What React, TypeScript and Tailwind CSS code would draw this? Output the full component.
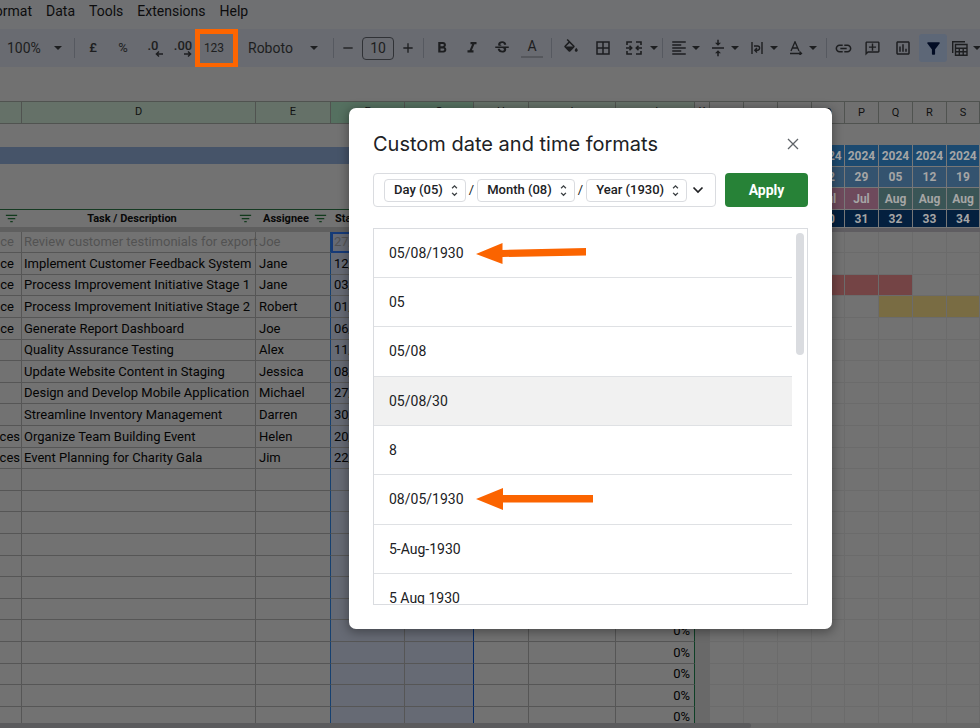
import type { ReactNode } from "react";
import {
  MdAdd,
  MdBorderAll,
  MdFilterAlt,
  MdFormatAlignLeft,
  MdFormatBold,
  MdFormatItalic,
  MdFilterList,
  MdLink,
  MdOutlineAddComment,
  MdOutlineInsertChart,
  MdRemove,
  MdStrikethroughS,
  MdUnfoldMore,
  MdVerticalAlignCenter,
} from "react-icons/md";

const MENUS = ["Data", "Tools", "Extensions", "Help"];

const TASKS = [
  ["ce", "Review customer testimonials for export", "Joe", "27/05"],
  ["ce", "Implement Customer Feedback System", "Jane", "12/06"],
  ["ce", "Process Improvement Initiative Stage 1", "Jane", "03/07"],
  ["ce", "Process Improvement Initiative Stage 2", "Robert", "01/08"],
  ["ce", "Generate Report Dashboard", "Joe", "06/08"],
  ["", "Quality Assurance Testing", "Alex", "11/08"],
  ["", "Update Website Content in Staging", "Jessica", "08/09"],
  ["", "Design and Develop Mobile Application", "Michael", "27/09"],
  ["", "Streamline Inventory Management", "Darren", "30/09"],
  ["ces", "Organize Team Building Event", "Helen", "20/10"],
  ["ces", "Event Planning for Charity Gala", "Jim", "22/10"],
];

const ROWS = Array.from({ length: 24 }, (_, i) => i);
const rowHeight = (i: number) => (i % 5 === 0 || i % 5 === 2 ? "h-[21px]" : "h-[22px]");

const WEEKS = [
  { col: "L", year: "", day: "", month: "", week: "" },
  { col: "M", year: "", day: "", month: "", week: "" },
  { col: "N", year: "", day: "", month: "", week: "" },
  { col: "O", year: "2024", day: "22", month: "Jul", week: "30" },
  { col: "P", year: "2024", day: "29", month: "Jul", week: "31" },
  { col: "Q", year: "2024", day: "05", month: "Aug", week: "32" },
  { col: "R", year: "2024", day: "12", month: "Aug", week: "33" },
  { col: "S", year: "2024", day: "19", month: "Aug", week: "34" },
];

const FORMATS = ["05/08/1930", "05", "05/08", "05/08/30", "8", "08/05/1930", "5-Aug-1930", "5 Aug 1930"];

function Caret() {
  return (
    <svg viewBox="0 0 8 4" className="h-1 w-2 shrink-0" fill="currentColor" aria-hidden="true">
      <path d="M0 0h8L4 4z" />
    </svg>
  );
}

function Separator() {
  return (
    <div className="flex w-2 shrink-0 justify-center">
      <div className="h-5 w-px bg-[#565960]" />
    </div>
  );
}

function Tool({ label, children, width = "w-[30px]" }: { label: string; children: ReactNode; width?: string }) {
  return (
    <button type="button" aria-label={label} className={`flex h-7 shrink-0 items-center justify-center ${width}`}>
      {children}
    </button>
  );
}

function MenuTool({ label, children, width = "w-[39px]" }: { label: string; children: ReactNode; width?: string }) {
  return (
    <button type="button" aria-label={label} className={`flex h-7 shrink-0 items-center ${width}`}>
      <span className="flex w-[26px] justify-center">{children}</span>
      <Caret />
    </button>
  );
}

function Decimal({ text, right = false }: { text: string; right?: boolean }) {
  return (
    <span className="relative mb-1 text-[13px] leading-5 font-medium">
      {text}
      <svg
        viewBox="0 0 8 6"
        className={`absolute top-[15px] h-[6px] w-2 ${right ? "right-0 -scale-x-100" : "-right-1"}`}
        fill="none"
        stroke="currentColor"
        strokeWidth="1.4"
        aria-hidden="true"
      >
        <path d="M8 3H1.5M4 .6L1.4 3L4 5.4" />
      </svg>
    </span>
  );
}

function Toolbar() {
  return (
    <div className="flex h-[38px] shrink-0 items-center overflow-hidden bg-[#696b71] text-[#1d1e20]">
      <label className="flex w-[70px] shrink-0 items-center pl-[7px]">
        <select aria-label="Zoom" className="w-[47px] appearance-none bg-transparent text-sm">
          <option>100%</option>
        </select>
        <Caret />
      </label>
      <Separator />
      <Tool label="Format as currency"><span className="text-[13px] font-medium">£</span></Tool>
      <Tool label="Format as percent"><span className="text-[13px]">%</span></Tool>
      <Tool label="Decrease decimal places"><Decimal text=".0" /></Tool>
      <Tool label="Increase decimal places"><Decimal text=".00" right /></Tool>
      <div className="relative">
        <Tool label="More formats" width="w-8"><span className="text-xs">123</span></Tool>
        <div className="pointer-events-none absolute -top-[5px] -left-[3px] h-[39px] w-[43px] border-[5px] border-[#fd6500]" />
      </div>
      <label className="flex w-[99px] shrink-0 items-center pl-[18px]">
        <select aria-label="Font" className="w-[62px] appearance-none bg-transparent text-sm">
          <option>Roboto</option>
        </select>
        <Caret />
      </label>
      <Separator />
      <Tool label="Decrease font size" width="w-[22px]"><MdRemove size={16} /></Tool>
      <input
        aria-label="Font size"
        defaultValue="10"
        className="mx-[3px] h-[23px] w-8 shrink-0 rounded-[4px] border border-[#303236] bg-transparent text-center text-sm"
      />
      <Tool label="Increase font size" width="w-[22px]"><MdAdd size={16} /></Tool>
      <Separator />
      <Tool label="Bold"><MdFormatBold size={18} /></Tool>
      <Tool label="Italic"><MdFormatItalic size={18} /></Tool>
      <Tool label="Strikethrough"><MdStrikethroughS size={18} /></Tool>
      <Tool label="Text colour">
        <span className="flex h-5 w-[22px] items-center justify-center border-b-2 border-[#55575c] pb-[2px] text-sm">A</span>
      </Tool>
      <Separator />
      <Tool label="Fill colour" width="w-8">
        <svg viewBox="0 0 24 24" className="h-[18px] w-[18px]" fill="currentColor" aria-hidden="true">
          <path d="M16.560 8.940L7.620 0 6.210 1.410l2.380 2.380-5.150 5.150a1.490 1.490 0 0 0 0 2.120l5.500 5.500c.29.29.68.44 1.060.44s.77-.15 1.060-.44l5.500-5.500c.59-.58.59-1.530 0-2.120zM5.210 10L10 5.210 14.790 10H5.210zM19 11.500s-2 2.170-2 3.500c0 1.100.9 2 2 2s2-.9 2-2c0-1.330-2-3.500-2-3.500z" />
        </svg>
      </Tool>
      <Tool label="Borders" width="w-8"><MdBorderAll size={18} /></Tool>
      <MenuTool label="Merge cells" width="w-[39px] gap-1 pl-[2px]">
        <svg viewBox="0 0 16 14" className="h-[14px] w-4" fill="none" stroke="currentColor" strokeWidth="1.6" aria-hidden="true">
          <path d="M6 1H1v3M1 10v3h5M10 1h5v3M15 10v3h-5M0 7h5.5M3.5 4.8L5.7 7L3.5 9.2M16 7h-5.5M12.5 4.8L10.3 7l2.2 2.2" />
        </svg>
      </MenuTool>
      <Separator />
      <MenuTool label="Horizontal align"><MdFormatAlignLeft size={18} /></MenuTool>
      <MenuTool label="Vertical align"><MdVerticalAlignCenter size={18} /></MenuTool>
      <MenuTool label="Text wrapping">
        <svg viewBox="0 0 12 12" className="h-3 w-3" fill="none" stroke="currentColor" strokeWidth="1.4" aria-hidden="true">
          <path d="M1 0v12M11 0v12M3 4h3.5a2 2 0 0 1 0 4.200H4M6 6L3.800 8.200L6 10.400" />
        </svg>
      </MenuTool>
      <MenuTool label="Text rotation">
        <svg viewBox="0 0 14 14" className="h-[14px] w-[14px]" fill="none" stroke="currentColor" strokeWidth="1.3" aria-hidden="true">
          <path d="M2 10L6 .8L10 10M3.300 7h5.400M1 12.500h11M10.500 10.500l2 2l-2 1.500" />
        </svg>
      </MenuTool>
      <Separator />
      <Tool label="Insert link" width="w-[27px]"><MdLink size={19} /></Tool>
      <Tool label="Insert comment"><MdOutlineAddComment size={17} className="-scale-x-100" /></Tool>
      <Tool label="Insert chart" width="w-8"><MdOutlineInsertChart size={18} /></Tool>
      <button type="button" aria-label="Filter" className="flex h-7 w-7 shrink-0 items-center justify-center rounded-[3px] bg-[#5d6777] text-[#020c24]">
        <MdFilterAlt size={19} />
      </button>
      <MenuTool label="Table views">
        <svg viewBox="0 0 16 15" className="h-[15px] w-4" fill="none" stroke="currentColor" strokeWidth="1.400" aria-hidden="true">
          <path d="M.7 12V.7H13M3.500 3.500h11.500v10.800H3.500zM3.500 7.200H15M3.500 10.700H15M7.300 7.200v7M11.200 7.200v7" />
        </svg>
      </MenuTool>
    </div>
  );
}

function Letter({ name, tone }: { name: string; tone: string }) {
  return (
    <th scope="col" className={`h-[23px] border-y border-r border-[#505350] text-[11px] font-normal text-[#111] ${tone}`}>
      {name}
    </th>
  );
}

function SheetHeading({ children, align }: { children: string; align: string }) {
  return (
    <span className={`flex items-center text-[11px] leading-4 font-bold text-[#080808] ${align}`}>
      <span className="flex-1 whitespace-nowrap">{children}</span>
      <MdFilterList size={15} className="shrink-0 text-[#123a1d]" />
    </span>
  );
}

const HEAD_CELL = "h-[18px] border-t border-[#153a22] p-0 align-middle";

function TaskSheet() {
  return (
    <table className="w-[710px] shrink-0 table-fixed border-separate border-spacing-0 self-start">
      <colgroup>
        <col className="w-[22px]" />
        <col className="w-[234px]" />
        <col className="w-[75px]" />
        <col className="w-[74px]" />
        <col className="w-[69px]" />
        <col className="w-[55px]" />
        <col className="w-[87px]" />
        <col className="w-[79px]" />
        <col className="w-[15px]" />
      </colgroup>
      <thead>
        <tr>
          <Letter name="" tone="bg-[#657168]" />
          <Letter name="D" tone="bg-[#657168]" />
          <Letter name="E" tone="bg-[#657168]" />
          <Letter name="F" tone="bg-[#557060]" />
          <Letter name="G" tone="bg-[#557060]" />
          <Letter name="H" tone="bg-[#657168]" />
          <Letter name="I" tone="bg-[#657168]" />
          <Letter name="J" tone="bg-[#657168]" />
          <Letter name="K" tone="bg-[#707070]" />
        </tr>
        <tr><td colSpan={9} className="h-[23px] p-0" /></tr>
        <tr><td colSpan={9} className="h-[17px] bg-[#465469] p-0" /></tr>
        <tr><td colSpan={9} className="h-[45px] p-0" /></tr>
        <tr>
          <th className={HEAD_CELL}><SheetHeading align="pr-[3px]">{""}</SheetHeading></th>
          <th className={HEAD_CELL}><SheetHeading align="pr-[3px] pl-1 text-center">Task / Description</SheetHeading></th>
          <th className={HEAD_CELL}><SheetHeading align="pl-[7px] pr-[3px] text-left">Assignee</SheetHeading></th>
          <th className={HEAD_CELL}><SheetHeading align="pl-1 pr-[3px] text-left">Start</SheetHeading></th>
          <th className={HEAD_CELL} />
          <th className={HEAD_CELL} />
          <th className={HEAD_CELL} />
          <th className={HEAD_CELL} />
          <th className={HEAD_CELL} />
        </tr>
        <tr><td colSpan={9} className="h-[5px] bg-[#5f5f5f] p-0" /></tr>
      </thead>
      <tbody className="text-[13px] leading-5 text-[#040404]">
        {ROWS.map((i) => {
          const [category = "", task = "", assignee = "", start = ""] = TASKS[i] ?? [];
          const tone = i === 0 ? "text-[#525252]" : "";
          const cell = `${rowHeight(i)} border-b border-[#565656] p-0 whitespace-nowrap ${tone}`;
          return (
            <tr key={i}>
              <td className={`${cell} border-r`}>
                <span className={`flex justify-end ${category === "ces" ? "pr-px" : "pr-[7px]"}`}>{category}</span>
              </td>
              <td className={`${cell} border-r pl-[2px]`}>{task}</td>
              <td className={`${cell} border-r border-r-[#16406f] pl-[3px]`}>{assignee}</td>
              <td className={`${cell} border-r bg-[#666a74] pl-[3px] ${i === 0 ? "outline-2 -outline-offset-2 outline-[#163a78]" : ""}`}>{start}</td>
              <td className={`${cell} border-r border-r-[#062a66] bg-[#666a74]`} />
              <td className={`${cell} border-r`} />
              <td className={`${cell} border-r`} />
              <td className={`${cell} border-r border-r-[#0e4026] pr-1 text-right`}>0%</td>
              <td className="bg-[#696969] p-0" />
            </tr>
          );
        })}
      </tbody>
    </table>
  );
}

function barTone(row: number, col: string) {
  if (row === 2 && "NOPQ".includes(col)) return "bg-[#744445]";
  if (row === 3 && "QRS".includes(col)) return "bg-[#796c43]";
  return "";
}

const BAND = "border-r border-b border-[#777] p-0 text-center font-bold text-[#a5a5a5]";

function Timeline() {
  return (
    <table className="min-w-0 flex-1 table-fixed border-separate border-spacing-0 self-start text-xs leading-4">
      <colgroup>
        {WEEKS.map((w) => (
          <col key={w.col} className={w.col === "S" ? "" : w.col === "O" ? "w-[33px]" : "w-[34px]"} />
        ))}
      </colgroup>
      <thead>
        <tr>{WEEKS.map((w) => <Letter key={w.col} name={w.col} tone="bg-[#707070]" />)}</tr>
        <tr><td colSpan={8} className="h-[21px] p-0" /></tr>
        <tr>{WEEKS.map((w) => <th key={w.col} className={`${BAND} h-[22px] bg-[#1c4a70]`}>{w.year}</th>)}</tr>
        <tr>{WEEKS.map((w) => <th key={w.col} className={`${BAND} h-[21px] bg-[#34536f]`}>{w.day}</th>)}</tr>
        <tr>
          {WEEKS.map((w) => (
            <th key={w.col} className={`${BAND} h-[22px] ${w.month === "Aug" ? "bg-[#3a5556]" : "bg-[#6e4a5c]"}`}>{w.month}</th>
          ))}
        </tr>
        <tr>{WEEKS.map((w) => <th key={w.col} className={`${BAND} h-[18px] bg-[#04203f]`}>{w.week}</th>)}</tr>
        <tr><td colSpan={8} className="h-[4px] bg-[#5f5d61] p-0" /></tr>
      </thead>
      <tbody>
        {ROWS.map((i) => (
          <tr key={i}>
            {WEEKS.map((w) => (
              <td key={w.col} className={`${rowHeight(i)} border-r border-b border-[#6b6b6b] p-0 ${barTone(i, w.col)}`} />
            ))}
          </tr>
        ))}
      </tbody>
    </table>
  );
}

function Part({ children }: { children: string }) {
  return (
    <button type="button" className="flex h-[23px] items-center gap-1 rounded-[4px] border border-[#dadce0] pr-[3px] pl-[9px] text-[13px] leading-5 font-medium whitespace-nowrap text-[#202124]">
      {children}
      <MdUnfoldMore size={15} className="text-[#3c4043]" />
    </button>
  );
}

function Arrow({ long = false }: { long?: boolean }) {
  return long ? (
    <svg viewBox="0 0 117 22" className="h-[22px] w-[117px]" fill="#fb6400" aria-hidden="true">
      <path d="M0 11L27 0V7L117 7V14.500L27 14.500V22z" />
    </svg>
  ) : (
    <svg viewBox="0 0 110 22" className="h-[22px] w-[110px]" fill="#fb6400" aria-hidden="true">
      <path d="M0 12L26.500 1V8L110 6V13.500L26.500 15V22z" />
    </svg>
  );
}

function FormatDialog() {
  return (
    <div role="dialog" aria-labelledby="dialog-title" className="w-[483px] rounded-[7px] bg-white p-6 shadow-[0_2px_10px_2px_rgba(0,0,0,0.3)]">
      <div className="flex h-6 items-center justify-between pr-2">
        <h1 id="dialog-title" className="font-['Inter','Roboto',sans-serif] text-xl leading-6 text-[#202124]">
          Custom date and time formats
        </h1>
        <button type="button" aria-label="Close" className="text-[#5f6368]">
          <svg viewBox="0 0 14 14" className="h-[14px] w-[14px]" fill="none" stroke="currentColor" strokeWidth="1.300" aria-hidden="true">
            <path d="M2 2l10 10M12 2L2 12" />
          </svg>
        </button>
      </div>
      <div className="mt-[17px] flex gap-[9px]">
        <div className="flex h-[34px] flex-1 items-center gap-[3px] rounded-[4px] border border-[#dadce0] pl-[10px] text-[13px] text-[#202124]">
          <Part>Day (05)</Part>/<Part>Month (08)</Part>/<Part>Year (1930)</Part>
          <button type="button" aria-label="Add a date part" className="ml-[2px]">
            <svg viewBox="0 0 12 8" className="h-2 w-3" fill="none" stroke="#202124" strokeWidth="1.700" aria-hidden="true">
              <path d="M1.500 1.500L6 6l4.500-4.500" />
            </svg>
          </button>
        </div>
        <button type="button" className="h-[34px] w-[83px] rounded-[4px] bg-[#278237] text-sm font-bold text-white">
          Apply
        </button>
      </div>
      <div className="mt-[21px] flex h-[377px] justify-between overflow-hidden border border-[#dadce0] pr-[3px]">
        <ul className="w-[418px] text-sm text-[#202124]">
          {FORMATS.map((format, i) => (
            <li
              key={format}
              className={`flex items-center gap-3 border-b border-[#dfe1e4] pb-px pl-[15px] ${i % 3 === 2 ? "h-[50px]" : "h-[49px]"} ${i === 3 ? "bg-[#f1f1f1]" : ""}`}
            >
              {format}
              {i === 0 && <Arrow />}
              {i === 5 && <Arrow long />}
            </li>
          ))}
        </ul>
        <div className="mt-1 h-[122px] w-2 rounded-full bg-[#dadce0]" />
      </div>
    </div>
  );
}

export default function App() {
  return (
    <div className="relative flex h-screen flex-col overflow-hidden bg-[#727272] font-['Roboto',sans-serif]">
      <nav className="flex h-[29px] shrink-0 gap-[14px] bg-[#6f7072] pt-[1px] text-sm leading-5 text-[#0c0c0d]">
        <button type="button" className="flex h-5 w-8 justify-end">ormat</button>
        {MENUS.map((name) => (
          <button key={name} type="button" className="h-5">{name}</button>
        ))}
      </nav>
      <Toolbar />
      <div className="h-[34px] shrink-0 bg-[#717171]" />
      <main className="flex min-h-0 flex-1 overflow-hidden">
        <TaskSheet />
        <Timeline />
      </main>
      <div className="h-[5px] shrink-0 bg-[#686868]">
        <div className="h-full w-[751px] rounded-r-full bg-[#5b5b5d]" />
      </div>
      <div className="absolute inset-0 flex items-start justify-center pt-[108px] pl-[201px]">
        <FormatDialog />
      </div>
    </div>
  );
}
